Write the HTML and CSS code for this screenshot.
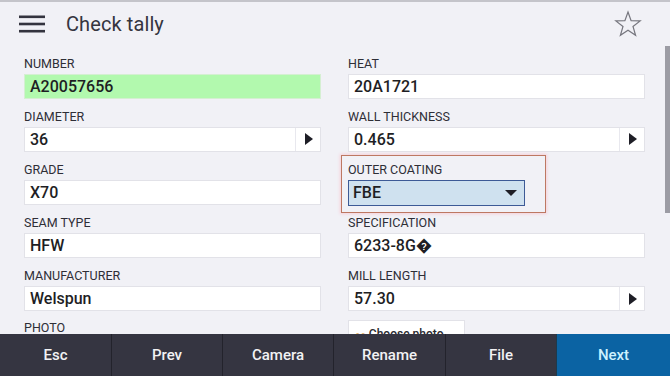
FILE: index.html
```html
<!DOCTYPE html>
<html>
<head>
<meta charset="utf-8">
<link rel="stylesheet" href="styles.css">
</head>
<body>
<div class="app">
  <header class="topbar">
    <svg class="menu" width="26" height="18" viewBox="0 0 26 18"><rect x="0" y="0.5" width="26" height="2.6" fill="#34343f"/><rect x="0" y="7.7" width="26" height="2.6" fill="#34343f"/><rect x="0" y="14.9" width="26" height="2.6" fill="#34343f"/></svg>
    <div class="title">Check tally</div>
    <svg class="star" width="28" height="28" viewBox="0 0 28 28"><path d="M14 2 L17.1 10.6 L26.2 10.9 L19 16.5 L21.6 25.3 L14 20.2 L6.4 25.3 L9 16.5 L1.8 10.9 L10.9 10.6 Z" fill="none" stroke="#76767e" stroke-width="1.2" stroke-linejoin="miter"/></svg>
  </header>
  <main class="content">
    <div class="grid">
      <div class="field">
        <div class="label">NUMBER</div>
        <div class="box green"><span class="val">A20057656</span></div>
      </div>
      <div class="field">
        <div class="label">HEAT</div>
        <div class="box"><span class="val">20A1721</span></div>
      </div>
      <div class="field">
        <div class="label">DIAMETER</div>
        <div class="box"><span class="val">36</span><span class="step"><span class="tri"></span></span></div>
      </div>
      <div class="field">
        <div class="label">WALL THICKNESS</div>
        <div class="box"><span class="val">0.465</span><span class="step"><span class="tri"></span></span></div>
      </div>
      <div class="field">
        <div class="label">GRADE</div>
        <div class="box"><span class="val">X70</span></div>
      </div>
      <div class="field focus">
        <div class="label">OUTER COATING</div>
        <div class="select"><span class="val">FBE</span><span class="down"></span></div>
      </div>
      <div class="field">
        <div class="label">SEAM TYPE</div>
        <div class="box"><span class="val">HFW</span></div>
      </div>
      <div class="field">
        <div class="label">SPECIFICATION</div>
        <div class="box"><span class="val">6233-8G&#xFFFD;</span></div>
      </div>
      <div class="field">
        <div class="label">MANUFACTURER</div>
        <div class="box"><span class="val">Welspun</span></div>
      </div>
      <div class="field">
        <div class="label">MILL LENGTH</div>
        <div class="box"><span class="val">57.30</span><span class="step"><span class="tri"></span></span></div>
      </div>
      <div class="field">
        <div class="label photo-label">PHOTO</div>
      </div>
      <div class="field">
        <div class="photo-btn"><span class="pic">&#9679;&#9679;</span> Choose photo</div>
      </div>
    </div>
    <div class="scrollbar"></div>
  </main>
  <footer class="actions">
    <div class="btn">Esc</div>
    <div class="btn">Prev</div>
    <div class="btn">Camera</div>
    <div class="btn">Rename</div>
    <div class="btn">File</div>
    <div class="btn next">Next</div>
  </footer>
</div>
</body>
</html>
```

FILE: styles.css
```css
* { box-sizing: border-box; }
html, body { margin: 0; padding: 0; }
body {
  font-family: Roboto, "Noto Sans", "Liberation Sans", sans-serif;
  background: #f1f1f6;
  color: #26262e;
}
.app {
  width: 670px;
  height: 376px;
  display: flex;
  flex-direction: column;
  overflow: hidden;
  border-top: 2px solid #c4c4ca;
}
.topbar {
  height: 44px;
  flex: none;
  display: flex;
  align-items: center;
  padding-left: 19px;
  padding-right: 28px;
}
.menu { flex: none; }
.title {
  margin-left: 21px;
  font-size: 20px;
  color: #35353f;
  flex: 1;
  letter-spacing: 0.1px;
}
.star { flex: none; }
.content {
  flex: 1;
  position: relative;
  overflow: hidden;
}
.grid {
  display: grid;
  grid-template-columns: 297px 297px;
  column-gap: 27px;
  row-gap: 7.75px;
  padding: 8px 0 0 24px;
}
.field { position: relative; }
.label {
  height: 20px;
  font-size: 12.5px;
  line-height: 16px;
  color: #2e2e36;
  padding-top: 2px;
}
.photo-label { line-height: 14px; height: 18px; }
.box {
  height: 25px;
  background: #ffffff;
  border: 1px solid #e2e2e8;
  display: flex;
  align-items: center;
}
.box.green {
  background: #b2f9ae;
  border-color: #d5efd2;
}
.val {
  flex: 1;
  padding-left: 5px;
  font-size: 16px;
  font-weight: 500;
  color: #1e1e24;
  white-space: nowrap;
}
.step {
  width: 25px;
  height: 100%;
  border-left: 1px solid #e8e8ee;
  display: flex;
  align-items: center;
  justify-content: center;
}
.tri {
  width: 0;
  height: 0;
  border-top: 6px solid transparent;
  border-bottom: 6px solid transparent;
  border-left: 8px solid #1e1e26;
  margin-left: 2px;
}
.focus::before {
  content: "";
  position: absolute;
  left: -7px;
  top: -5px;
  width: 203px;
  height: 56px;
  border: 1.5px solid #bd7862;
  box-shadow: 0 0 3px 1px #f6cfd8;
  pointer-events: none;
}
.select {
  width: 177px;
  height: 26px;
  background: #cfe1ef;
  border: 1.5px solid #3d5a96;
  display: flex;
  align-items: center;
}
.select .val { padding-left: 4px; }
.down {
  width: 0;
  height: 0;
  border-left: 6px solid transparent;
  border-right: 6px solid transparent;
  border-top: 6px solid #1e1e26;
  margin-right: 7px;
}
.photo-btn {
  width: 117px;
  height: 40px;
  margin-top: 1px;
  background: #ffffff;
  border: 1px solid #e2e2e8;
  padding: 6px 0 0 6px;
  font-size: 12px;
  line-height: 14px;
  font-weight: 500;
  color: #2a2a30;
  white-space: nowrap;
}
.pic { color: #d89a40; font-size: 9px; }
.scrollbar {
  position: absolute;
  right: 0;
  top: 0;
  width: 5px;
  height: 167px;
  background: #9c9ca4;
}
.actions {
  height: 42px;
  flex: none;
  display: grid;
  grid-template-columns: 111px 111px 111px 112px 111px 114px;
  background: #353541;
}
.btn {
  display: flex;
  align-items: center;
  justify-content: center;
  color: #f2f2f4;
  font-size: 15px;
  font-weight: 500;
  border-left: 1px solid #23232c;
}
.btn:first-child { border-left: none; }
.btn.next {
  background: #0b63a3;
  color: #cdf2ff;
  border-left: 1px solid #1d3a4c;
}
```
